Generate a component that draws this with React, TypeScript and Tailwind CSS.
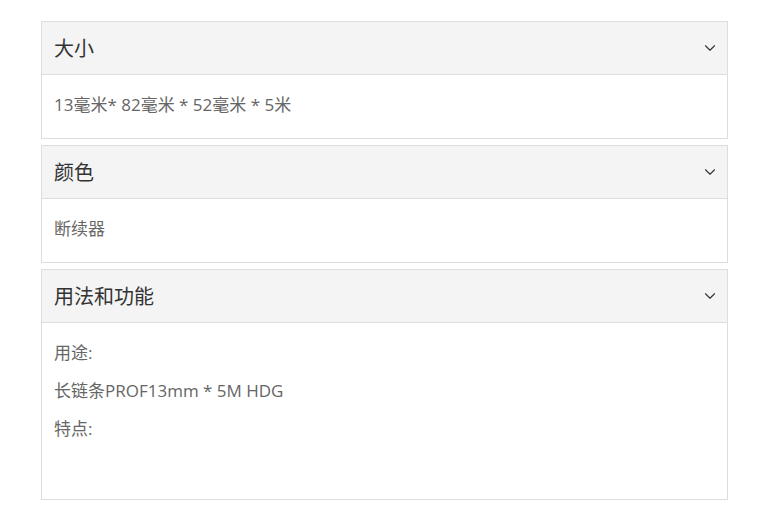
import { ChevronDown } from 'lucide-react';

const sections = [
  { title: '大小', lines: ['13毫米* 82毫米 * 52毫米 * 5米'], pb: 'pb-[21px]' },
  { title: '颜色', lines: ['断续器'], pb: 'pb-[21px]' },
  { title: '用法和功能', lines: ['用途:', '长链条PROF13mm * 5M HDG', '特点:'], pb: 'pb-[58px]' },
];

export default function App() {
  return (
    <main
      className="min-h-[511px] bg-white px-[41px] pt-[21px]"
      style={{ fontFamily: '"Open Sans", "Noto Sans CJK SC", sans-serif' }}
    >
      <div className="w-[687px] space-y-[6px]">
        {sections.map((s) => (
          <div key={s.title} className="border border-[#dddddd]">
            <div className="flex h-[53px] items-center justify-between border-b border-[#dddddd] bg-[#f4f4f4] pl-3 pr-[8px]">
              <span className="pt-[2px] text-[20px] text-[#333]">{s.title}</span>
              <ChevronDown className="h-[18px] w-[18px] text-[#333]" strokeWidth={1.5} />
            </div>
            <div className={`space-y-[14px] px-3 pt-[18px] ${s.pb}`}>
              {s.lines.map((l, i) => (
                <p key={i} className="text-[17px] leading-6 text-[#666]">
                  {l}
                </p>
              ))}
            </div>
          </div>
        ))}
      </div>
    </main>
  );
}
